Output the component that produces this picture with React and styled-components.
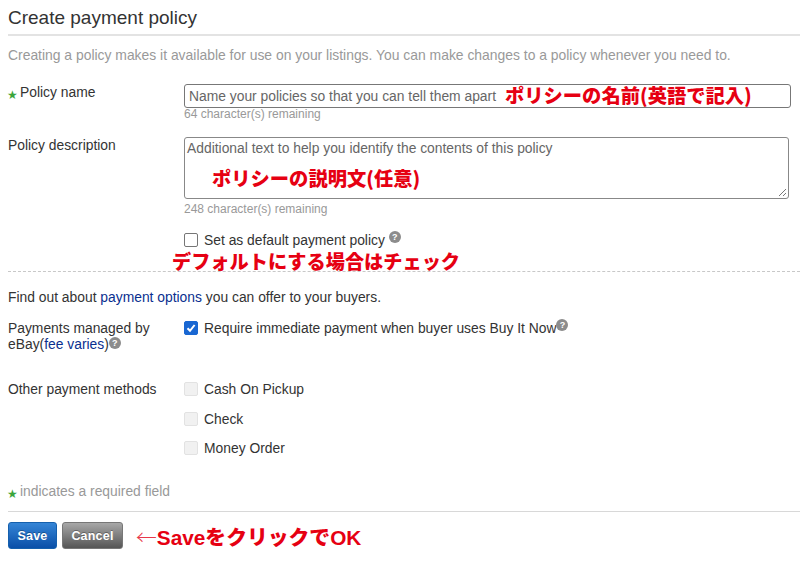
import React from 'react'
import styled, { createGlobalStyle } from 'styled-components'

const GlobalStyle = createGlobalStyle`
html, body {
    margin: 0;
    padding: 0;
    background: #fff;
}
body {
    font-family: "Liberation Sans", Arial, sans-serif;
    font-size: 13.85px;
    color: #333;
}
`

const Page = styled.div`
width: 800px;
height: 563px;
overflow: hidden;
padding-left: 8px;
box-sizing: border-box;
position: relative;
`

const Title = styled.h1`
margin: 0;
height: 34px;
line-height: 36px;
font-size: 19px;
font-weight: normal;
color: #333;
border-bottom: 2px solid #e3e3e3;
`

const Intro = styled.p`
margin: 0;
padding-top: 11px;
height: 37px;
line-height: 16px;
font-size: 13.9px;
color: #999;
`

const Row = styled.div`
display: grid;
grid-template-columns: 176px 1fr;
height: ${(p) => p.$height}px;
position: relative;
`

const Label = styled.div`
line-height: 16px;
padding-top: ${(p) => p.$top || 0}px;
color: #333;
`

const Star = styled.span`
display: inline-block;
width: 12px;
margin-left: -1px;
margin-right: 1px;
color: #3ba53b;
font-family: "DejaVu Sans", sans-serif;
font-size: 12px;
line-height: 10px;
position: relative;
top: 2px;
`

const Field = styled.div`
position: relative;
`

const NameBox = styled.div`
width: 607px;
height: 24px;
box-sizing: border-box;
border: 1px solid #777;
border-radius: 3px;
padding-left: 4px;
line-height: 22px;
color: #666;
`

const DescBox = styled.div`
width: 605px;
height: 62px;
box-sizing: border-box;
border: 1px solid #888;
border-radius: 3px;
padding: 1px 0 0 2px;
line-height: 18px;
color: #666;
position: relative;
`

const Grip = styled.svg`
position: absolute;
right: 1px;
bottom: 1px;
`

const Hint = styled.div`
font-size: 12px;
line-height: 14px;
color: #999;
margin-top: ${(p) => p.$top || 0}px;
`

const Note = styled.span`
position: absolute;
color: #e60012;
font-family: "Noto Sans CJK JP", "Liberation Sans", sans-serif;
font-weight: 900;
font-size: ${(p) => p.$size || 19.3}px;
line-height: 20px;
white-space: nowrap;
left: ${(p) => p.$left}px;
top: ${(p) => p.$top}px;
`

const BottomNote = styled(Note)`
font-family: "Liberation Sans", "Noto Sans CJK JP", sans-serif;
`

const Arrow = styled.span`
font-family: "Noto Sans CJK JP", sans-serif;
font-weight: 300;
color: #e8384a;
`

const CheckRow = styled.div`
display: flex;
align-items: center;
height: 18px;
margin-bottom: ${(p) => p.$gap || 0}px;
color: #333;
`

const Box = styled.span`
display: inline-flex;
align-items: center;
justify-content: center;
width: 14px;
height: 14px;
box-sizing: border-box;
margin-right: 6px;
border-radius: 2px;
border: 1px solid ${(p) => (p.$checked ? '#1967d2' : p.$disabled ? '#e2e2e2' : '#767676')};
background: ${(p) => (p.$checked ? '#1967d2' : p.$disabled ? '#f1f1f1' : '#fff')};
flex: none;
`

const Help = styled.span`
display: inline-flex;
align-items: center;
justify-content: center;
width: 12px;
height: 12px;
border-radius: 50%;
background: #8c8c8c;
color: #fff;
font-size: 9px;
font-weight: bold;
line-height: 12px;
position: relative;
top: -3px;
margin-left: ${(p) => p.$left || 0}px;
`

const Divider = styled.div`
border-top: 1px dashed #c8c8c8;
`

const Offers = styled.p`
margin: 0;
padding-top: 16px;
height: 31px;
line-height: 18px;
color: #333;
`

const Blue = styled.a`
color: #0a2f8f;
text-decoration: none;
`

const Required = styled.div`
line-height: 18px;
color: #999;
`

const Actions = styled.div`
border-top: 1px solid #d8d8d8;
margin-top: 11px;
padding-top: 10px;
display: flex;
gap: 5px;
position: relative;
`

const Button = styled.button`
width: ${(p) => p.$width}px;
height: 27px;
padding: 0;
border-radius: 3px;
font-family: "Liberation Sans", Arial, sans-serif;
font-size: 12.5px;
font-weight: bold;
letter-spacing: 0.2px;
color: #fff;
text-shadow: 0 -1px 0 rgba(0, 0, 0, 0.3);
border: 1px solid ${(p) => (p.$primary ? '#1560ad' : '#777')};
background: ${(p) => (p.$primary
    ? 'linear-gradient(#3585d6, #0a4fa8)'
    : 'linear-gradient(#a8a8a8, #555)')};
`

function App() {
  return (
    <Page>
      <GlobalStyle />
      <Title>Create payment policy</Title>
      <Intro>Creating a policy makes it available for use on your listings. You can make changes to a policy whenever you need to.</Intro>

      <Row $height={53}>
        <Label><Star>★</Star>Policy name</Label>
        <Field>
          <NameBox>Name your policies so that you can tell them apart</NameBox>
          <Hint $top={-1}>64 character(s) remaining</Hint>
          <Note $left={321} $top={1}>ポリシーの名前(英語で記入)</Note>
        </Field>
      </Row>

      <Row $height={94}>
        <Label>Policy description</Label>
        <Field>
          <DescBox>
            Additional text to help you identify the contents of this policy
            <Grip width="10" height="10" viewBox="0 0 10 10">
              <path d="M9 2 L2 9 M9 6 L6 9" stroke="#777" strokeWidth="1" fill="none" />
            </Grip>
          </DescBox>
          <Hint $top={3}>248 character(s) remaining</Hint>
          <Note $left={28} $top={31}>ポリシーの説明文(任意)</Note>
        </Field>
      </Row>

      <Row $height={40}>
        <div />
        <Field>
          <CheckRow>
            <Box />
            Set as default payment policy<Help $left={4}>?</Help>
          </CheckRow>
          <Note $left={-12} $top={20} $size={19.2}>デフォルトにする場合はチェック</Note>
        </Field>
      </Row>

      <Divider />
      <Offers>Find out about <Blue>payment options</Blue> you can offer to your buyers.</Offers>

      <Row $height={61}>
        <Label $top={1}>Payments managed by<br />eBay(<Blue>fee varies</Blue>)<Help>?</Help></Label>
        <CheckRow>
          <Box $checked>
            <svg width="10" height="10" viewBox="0 0 10 10">
              <path d="M1.5 5.2 L4 7.8 L8.6 2" stroke="#fff" strokeWidth="2" fill="none" />
            </svg>
          </Box>
          Require immediate payment when buyer uses Buy It Now<Help>?</Help>
        </CheckRow>
      </Row>

      <Row $height={102}>
        <Label $top={1}>Other payment methods</Label>
        <div>
          <CheckRow $gap={12}><Box $disabled />Cash On Pickup</CheckRow>
          <CheckRow $gap={11}><Box $disabled />Check</CheckRow>
          <CheckRow><Box $disabled />Money Order</CheckRow>
        </div>
      </Row>

      <Required><Star>★</Star>indicates a required field</Required>

      <Actions>
        <Button $primary $width={49}>Save</Button>
        <Button $width={61}>Cancel</Button>
        <BottomNote $left={128} $top={14} $size={20.8}><Arrow>←</Arrow>SaveをクリックでOK</BottomNote>
      </Actions>
    </Page>
  )
}

export default App
